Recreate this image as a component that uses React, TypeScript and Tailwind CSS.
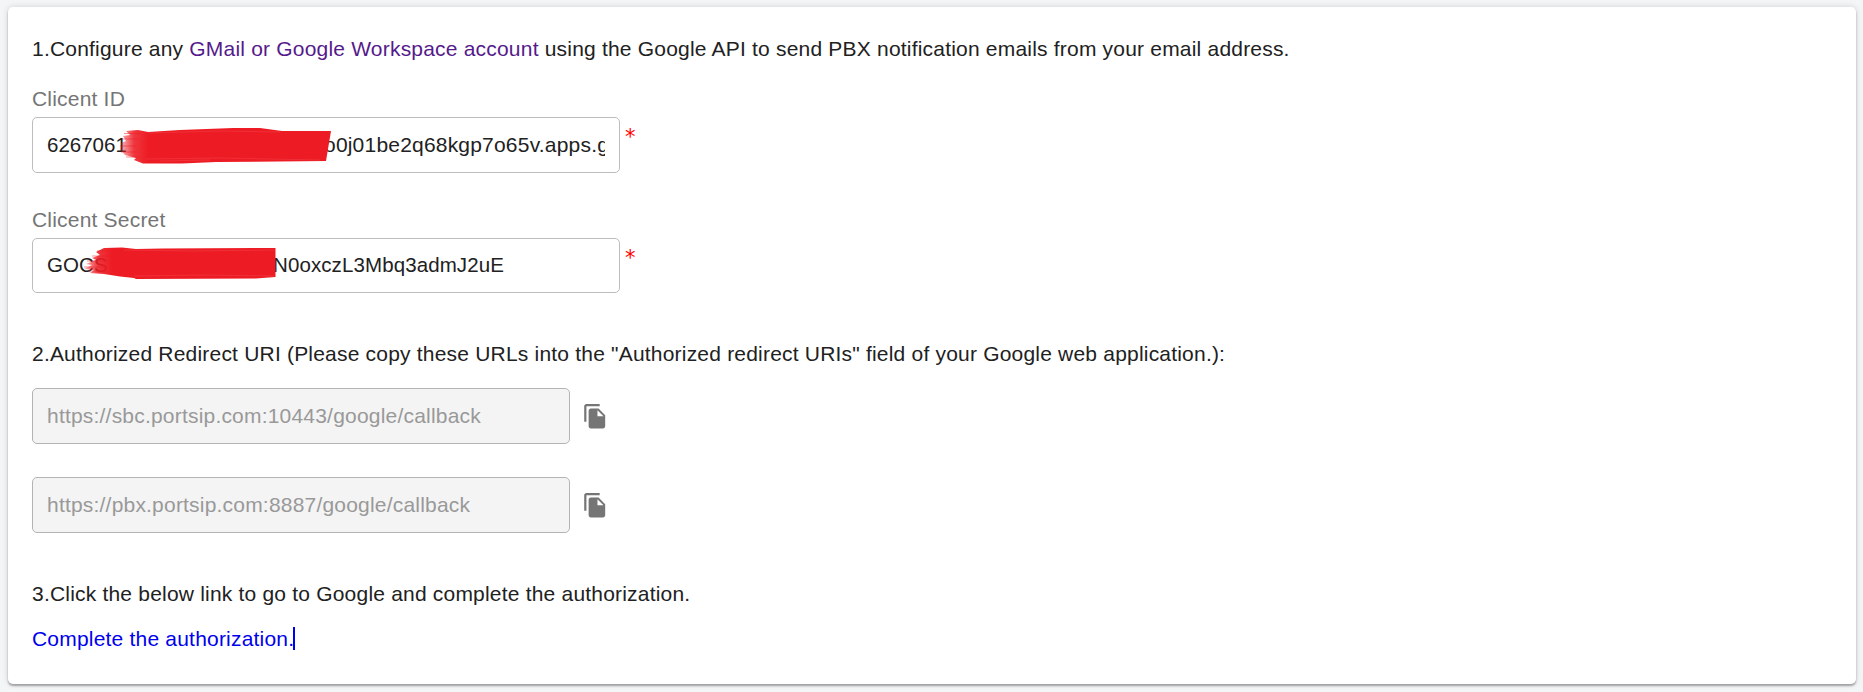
import React from "react";

type ScribbleProps = { id: string; width: number; height: number; className: string; shape: string; bristles: string; streaks: string };

function Scribble({ id, width, height, className, shape, bristles, streaks }: ScribbleProps) {
  return (
    <svg width={width} height={height} viewBox={`0 0 ${width} ${height}`} className={className} aria-hidden="true">
      <defs>
        <linearGradient id={id} gradientUnits="userSpaceOnUse" x1="0" x2="28" y1="0" y2="0">
          <stop offset="0" stopColor="#ed1c24" stopOpacity="0.3" />
          <stop offset="0.5" stopColor="#ed1c24" stopOpacity="0.88" />
          <stop offset="1" stopColor="#ed1c24" stopOpacity="1" />
        </linearGradient>
      </defs>
      <path d={shape} fill={`url(#${id})`} />
      <path d={bristles} stroke="#ed1c24" strokeWidth="1.2" fill="none" opacity="0.5" />
      <path d={streaks} stroke="#f23c44" strokeWidth="1" fill="none" opacity="0.6" />
    </svg>
  );
}

function CopyIcon() {
  return (
    <svg width="26.5" height="26.5" viewBox="0 0 24 24" fill="#757575" className="ml-[11.5px] shrink-0">
      <path d="M16 1H4c-1.1 0-2 .9-2 2v14h2V3h12V1zm-1 4l6 6v10c0 1.1-.9 2-2 2H7.99C6.89 23 6 22.1 6 21l.01-14c0-1.1.89-2 1.99-2h7zm-1 7h5.5L14 6.5V12z" />
    </svg>
  );
}

function Required() {
  return <span className="ml-[5px] mt-[8px] font-['DejaVu_Sans',sans-serif] text-[21px] leading-6 tracking-normal text-[#f00]">*</span>;
}

function UrlField({ url }: { url: string }) {
  return (
    <div className="flex h-14 items-center">
      <div className="flex h-14 w-[538px] items-center rounded-[5px] border border-[#b4b4b4] bg-[#f4f4f4] px-[14px] text-[#999]">{url}</div>
      <CopyIcon />
    </div>
  );
}

export default function App() {
  return (
    <div className="h-[692px] bg-[#f4f5f7] px-2 pt-[7px] font-['Liberation_Sans',Arial,sans-serif] text-[21px] leading-6 tracking-[0.2px] text-[#212121]">
      <main className="mr-[-1px] h-[677px] rounded-[5px] bg-white px-6 pt-[30px] shadow-[0_2px_2px_rgba(0,0,0,0.3),0_0_6px_rgba(0,0,0,0.14)]">
        <p className="whitespace-nowrap">
          1.Configure any <a className="text-[#551a8b]">GMail or Google Workspace account</a> using the Google API to send PBX notification emails from your email address.
        </p>

        <label className="mt-[26px] block text-[#757575]">Clicent ID</label>
        <div className="mt-1.5 flex">
          <div className="relative flex h-14 w-[588px] items-center rounded-[5px] border border-[#bdbdbd] px-[14px]">
            <div className="flex w-full overflow-hidden whitespace-nowrap">
              <span className="w-[277px] shrink-0 text-[20.5px] tracking-normal">6267061</span>
              <span>o0j01be2q68kgp7o65v.apps.g</span>
            </div>
            <Scribble
              id="id-stroke"
              width={212}
              height={37}
              className="absolute left-[87px] top-[9px]"
              shape="M0 22L2 19L1 16L6 14L3 9L10 8L6 4L18 3L28 5L60 3L113 1L140 1L162 4L211 4L206 34L96 35L62 36.5L23 36.5L14 33L16 31L5 28Z"
              bristles="M4 6.5H20M2 12H18M0 19H16M1 25H18M6 30H20"
              streaks="M28 6L100 4L160 5M26 32L100 31L200 33M40 34L90 33"
            />
          </div>
          <Required />
        </div>

        <label className="mt-[35px] block text-[#757575]">Clicent Secret</label>
        <div className="mt-1.5 flex">
          <div className="relative flex h-[55px] w-[588px] items-center rounded-[5px] border border-[#bdbdbd] px-[14px] pb-px text-[20.5px] tracking-[0.1px]">
            <div className="flex w-full overflow-hidden whitespace-nowrap">
              <span className="w-[226px] shrink-0">GOCS</span>
              <span>N0oxczL3Mbq3admJ2uE</span>
            </div>
            <Scribble
              id="secret-stroke"
              width={193}
              height={33}
              className="absolute left-[51px] top-[8px]"
              shape="M0 22L8 18L2 17L12 13L8 11L16 8L12 5L20 1L38 0.5L52 2L79 1.5L191.5 1L191.5 30L172 31.5L52 32L50 31L36 29.5L20 27L6 26L10 23Z"
              bristles="M13 4H34M8 9H28M3 14H24M0 20H22M4 24H24"
              streaks="M40 3L110 4L190 3M50 29L120 28L190 29"
            />
          </div>
          <Required />
        </div>

        <p className="mb-[22px] mt-[49px] whitespace-nowrap">
          2.Authorized Redirect URI (Please copy these URLs into the "Authorized redirect URIs" field of your Google web application.):
        </p>
        <div className="flex flex-col gap-[33px]">
          <UrlField url="https://sbc.portsip.com:10443/google/callback" />
          <UrlField url="https://pbx.portsip.com:8887/google/callback" />
        </div>

        <p className="mt-[49px]">3.Click the below link to go to Google and complete the authorization.</p>
        <div className="mt-[21px] flex items-center">
          <a className="text-[#0000ee]">Complete the authorization.</a>
          <span className="-mt-px ml-[-1px] h-[23px] w-0.5 bg-[#0000ee]" />
        </div>
      </main>
    </div>
  );
}
